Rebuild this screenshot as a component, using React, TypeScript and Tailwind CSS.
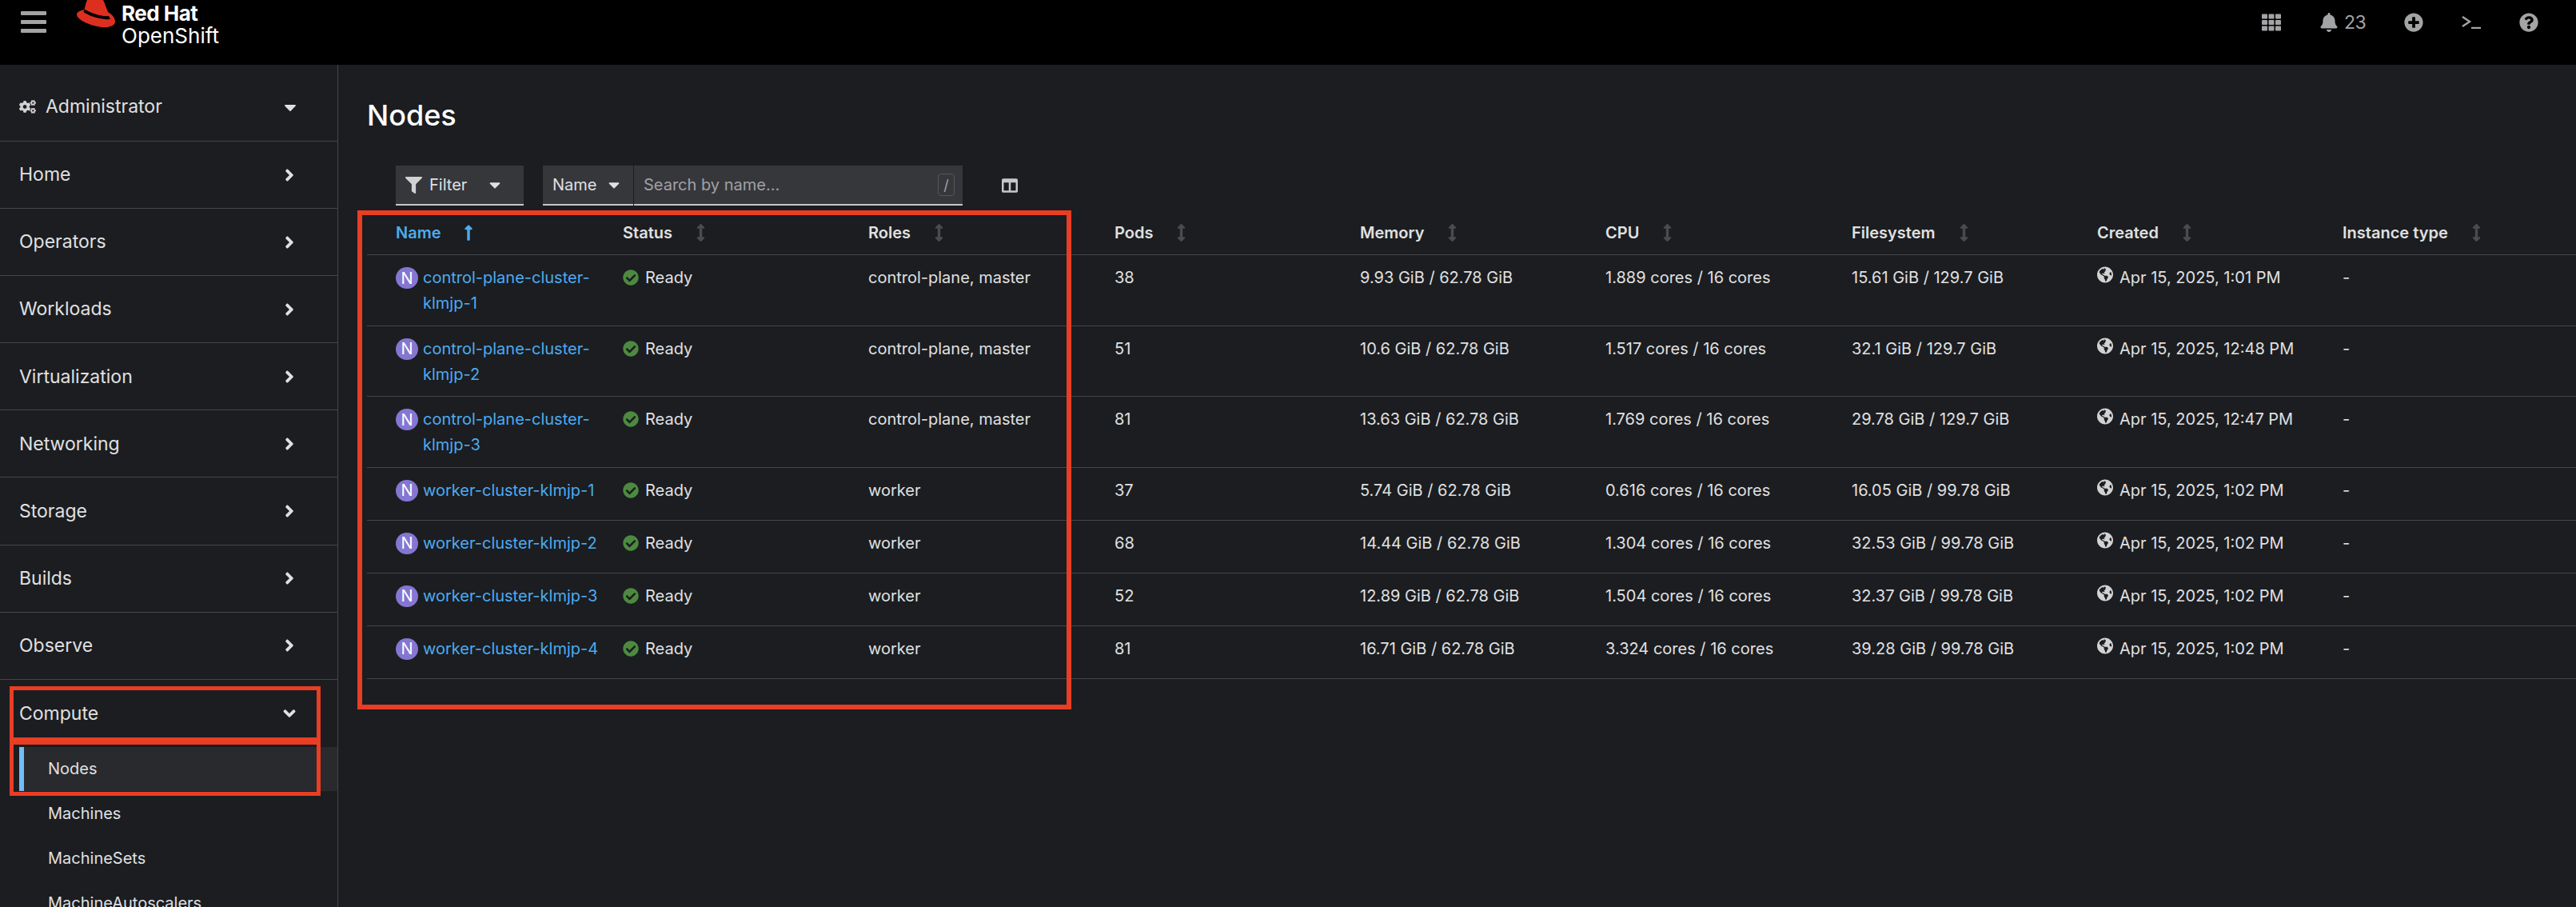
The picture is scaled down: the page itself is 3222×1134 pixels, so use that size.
import { FaBell, FaPlusCircle, FaQuestionCircle, FaTh, FaFilter, FaGlobeAmericas, FaCheckCircle, FaCogs, FaColumns, FaLongArrowAltUp, FaArrowsAltV, FaAngleRight, FaAngleDown, FaCaretDown } from 'react-icons/fa'

const navItems = ['Home', 'Operators', 'Workloads', 'Virtualization', 'Networking', 'Storage', 'Builds', 'Observe']
const subItems = ['Machines', 'MachineSets', 'MachineAutoscalers']

const columns = ['Name', 'Status', 'Roles', 'Pods', 'Memory', 'CPU', 'Filesystem', 'Created', 'Instance type']

const nodes = [
  { name: 'control-plane-cluster-klmjp-1', roles: 'control-plane, master', pods: '38', memory: '9.93 GiB / 62.78 GiB', cpu: '1.889 cores / 16 cores', fs: '15.61 GiB / 129.7 GiB', created: 'Apr 15, 2025, 1:01 PM' },
  { name: 'control-plane-cluster-klmjp-2', roles: 'control-plane, master', pods: '51', memory: '10.6 GiB / 62.78 GiB', cpu: '1.517 cores / 16 cores', fs: '32.1 GiB / 129.7 GiB', created: 'Apr 15, 2025, 12:48 PM' },
  { name: 'control-plane-cluster-klmjp-3', roles: 'control-plane, master', pods: '81', memory: '13.63 GiB / 62.78 GiB', cpu: '1.769 cores / 16 cores', fs: '29.78 GiB / 129.7 GiB', created: 'Apr 15, 2025, 12:47 PM' },
  { name: 'worker-cluster-klmjp-1', roles: 'worker', pods: '37', memory: '5.74 GiB / 62.78 GiB', cpu: '0.616 cores / 16 cores', fs: '16.05 GiB / 99.78 GiB', created: 'Apr 15, 2025, 1:02 PM' },
  { name: 'worker-cluster-klmjp-2', roles: 'worker', pods: '68', memory: '14.44 GiB / 62.78 GiB', cpu: '1.304 cores / 16 cores', fs: '32.53 GiB / 99.78 GiB', created: 'Apr 15, 2025, 1:02 PM' },
  { name: 'worker-cluster-klmjp-3', roles: 'worker', pods: '52', memory: '12.89 GiB / 62.78 GiB', cpu: '1.504 cores / 16 cores', fs: '32.37 GiB / 99.78 GiB', created: 'Apr 15, 2025, 1:02 PM' },
  { name: 'worker-cluster-klmjp-4', roles: 'worker', pods: '81', memory: '16.71 GiB / 62.78 GiB', cpu: '3.324 cores / 16 cores', fs: '39.28 GiB / 99.78 GiB', created: 'Apr 15, 2025, 1:02 PM' },
]

const gridCls = 'grid grid-cols-[284px_307px_308px_307px_307px_308px_307px_307px_1fr] pl-[36px] border-b border-[#44464a]'

function Hat() {
  return (
    <svg viewBox="0 0 48 35" className="w-[48px] h-[35px] shrink-0">
      <path d="M13 0 L33 0 C35 4 37 10 39 15 C44 18 48 22 48 27 C48 32 41 34.500 33 34 C18 33 0 25 0 18 C0 15 5 13 9.500 12 C10.500 8 11.500 3 13 0 Z" fill="#dc2f20" />
      <path d="M9.500 11.500 C17 16 30 21 40 20 L42 24 C31 25 15 20 8.500 15 Z" fill="#000" />
    </svg>
  )
}

function TopBar() {
  return (
    <header className="h-[81px] bg-black shrink-0 flex items-start">
      <div className="ml-[26px] mt-[14px] w-[32px] flex flex-col gap-[6px] shrink-0">
        <div className="h-[5px] rounded-[1px] bg-[#a3a4a6]" />
        <div className="h-[5px] rounded-[1px] bg-[#a3a4a6]" />
        <div className="h-[5px] rounded-[1px] bg-[#a3a4a6]" />
      </div>
      <div className="ml-[38px] shrink-0"><Hat /></div>
      <div className="ml-[8px] text-white">
        <div className="text-[26px] font-bold leading-[28px] mt-[3px] tracking-[-0.5px]">Red Hat</div>
        <div className="text-[26px] leading-[30px] -mt-[1px]">OpenShift</div>
      </div>
      <div className="ml-auto h-[56px] flex items-center text-[#a3a4a6] pr-[47px]">
        <FaTh className="w-[24px] h-[24px]" />
        <FaBell className="w-[22px] h-[24px] ml-[49px]" />
        <span className="text-[23px] ml-[8px] w-[26px] tracking-[-0.5px]">23</span>
        <FaPlusCircle className="w-[24px] h-[24px] ml-[49px]" />
        <svg viewBox="0 0 24 16" className="w-[24px] h-[16px] ml-[48px]" fill="none" stroke="currentColor" strokeWidth="2.400">
          <path d="M1 1 L10 7 L1 13" />
          <path d="M12 15 H24" />
        </svg>
        <FaQuestionCircle className="w-[24px] h-[24px] ml-[48px]" />
      </div>
    </header>
  )
}

function Sidebar() {
  return (
    <aside className="w-[423px] shrink-0 border-r border-[#44464a] text-[#e0e0e0] overflow-hidden">
      <div className="h-[96px] border-b border-[#44464a] flex items-center pt-[10px] pl-[24px] pr-[47px] text-[23px]">
        <FaCogs className="w-[21px] h-[17px] mr-[12px] text-[#d2d2d2]" />
        <span>Administrator</span>
        <FaCaretDown className="ml-auto w-[24px] h-[24px]" />
      </div>
      {navItems.map(item => (
        <div key={item} className="h-[84.1px] border-b border-[#44464a] flex items-center pl-[24px] pr-[50px] text-[23px]">
          <span>{item}</span>
          <FaAngleRight className="ml-auto w-[20px] h-[24px]" />
        </div>
      ))}
      <div className="h-[84px] flex items-center pl-[24px] pr-[48px] text-[23px]">
        <span>Compute</span>
        <FaAngleDown className="ml-auto w-[24px] h-[24px]" />
      </div>
      <div className="ml-[24px] h-[55px] bg-[#292a2e] border-l-[6px] border-[#73bcf7] flex items-center pl-[30px] text-[20px]">Nodes</div>
      {subItems.map(item => (
        <div key={item} className="h-[56px] flex items-center pl-[60px] text-[20px]">{item}</div>
      ))}
    </aside>
  )
}

function Toolbar() {
  return (
    <div className="ml-[36px] mt-[42px] h-[50px] flex items-stretch text-[20px]">
      <div className="w-[160px] bg-[#36373b] border-b-2 border-[#c7c7c7] flex items-center pl-[12px] text-[#e0e0e0]">
        <FaFilter className="w-[21px] h-[21px] text-[#d2d2d2]" />
        <span className="ml-[9px]">Filter</span>
        <FaCaretDown className="ml-[24px] w-[22px] h-[22px]" />
      </div>
      <div className="ml-[24px] w-[113px] bg-[#36373b] border-b-2 border-[#c7c7c7] flex items-center pl-[12px] text-[#e0e0e0]">
        <span>Name</span>
        <FaCaretDown className="ml-[11px] w-[22px] h-[22px]" />
      </div>
      <div className="w-[411px] ml-px bg-[#36373b] border-b-2 border-[#c7c7c7] flex items-center pl-[12px] pr-[10px] text-[#a0a1a3]">
        <span>Search by name...</span>
        <span className="ml-auto w-[21px] h-[28px] border border-[#55565a] rounded-[4px] flex items-center justify-center text-[18px]">/</span>
      </div>
      <FaColumns className="ml-[48px] self-center w-[22px] h-[20px] text-[#c7c7c7]" />
    </div>
  )
}

function HeaderCell({ label }: { label: string }) {
  const active = label === 'Name'
  return (
    <div className={`flex items-center font-semibold ${active ? 'text-[#4dabf0]' : 'text-[#e0e0e0]'}`}>
      <span>{label}</span>
      {active
        ? <FaLongArrowAltUp className="ml-[28px] w-[12px] h-[22px]" />
        : <FaArrowsAltV className="ml-[30px] w-[11px] h-[22px] text-[#4a4b4f]" />}
    </div>
  )
}

function NodesTable() {
  return (
    <div className="text-[20px] text-[#e0e0e0]">
      <div className={`${gridCls} h-[62px] pt-[7px]`}>
        {columns.map(c => <HeaderCell key={c} label={c} />)}
      </div>
      {nodes.map((n, i) => (
        <div key={n.name} className={`${gridCls} pt-[12px] leading-[32px] ${i < 3 ? 'h-[88.6px]' : 'h-[66px]'}`}>
          <div className="flex items-start">
            <span className="mt-[3px] w-[28px] h-[27px] rounded-full bg-[#8476d1] text-white flex items-center justify-center shrink-0 text-[20px] leading-none">N</span>
            <span className="ml-[6px] text-[#4dabf0] pr-[20px]">{n.name}</span>
          </div>
          <div className="flex items-start">
            <FaCheckCircle className="mt-[6px] w-[20px] h-[20px] text-[#4d8a3f] shrink-0" />
            <span className="ml-[8px]">Ready</span>
          </div>
          <div>{n.roles}</div>
          <div>{n.pods}</div>
          <div>{n.memory}</div>
          <div>{n.cpu}</div>
          <div>{n.fs}</div>
          <div className="flex items-start">
            <FaGlobeAmericas className="mt-[2px] w-[20px] h-[21px] text-[#d2d2d2] shrink-0" />
            <span className="ml-[8px]">{n.created}</span>
          </div>
          <div>-</div>
        </div>
      ))}
    </div>
  )
}

export default function App() {
  return (
    <div className="relative w-[3222px] h-[1134px] overflow-hidden bg-[#1b1d21] flex flex-col [font-family:Inter,sans-serif]">
      <TopBar />
      <div className="flex flex-1 min-h-0">
        <Sidebar />
        <main className="flex-1 min-w-0 pl-[36px]">
          <h1 className="mt-[42px] text-[36px] leading-[42px] font-medium text-white">Nodes</h1>
          <Toolbar />
          <NodesTable />
        </main>
      </div>
      {/* annotation boxes drawn over the screenshot */}
      <div className="absolute left-[447px] top-[263px] w-[893px] h-[624px] border-[6px] border-[#e93d24]" />
      <div className="absolute left-[12px] top-[858px] w-[389px] h-[69px] border-[5px] border-[#e93d24]" />
      <div className="absolute left-[12px] top-[926px] w-[389px] h-[69px] border-[5px] border-[#e93d24]" />
    </div>
  )
}
